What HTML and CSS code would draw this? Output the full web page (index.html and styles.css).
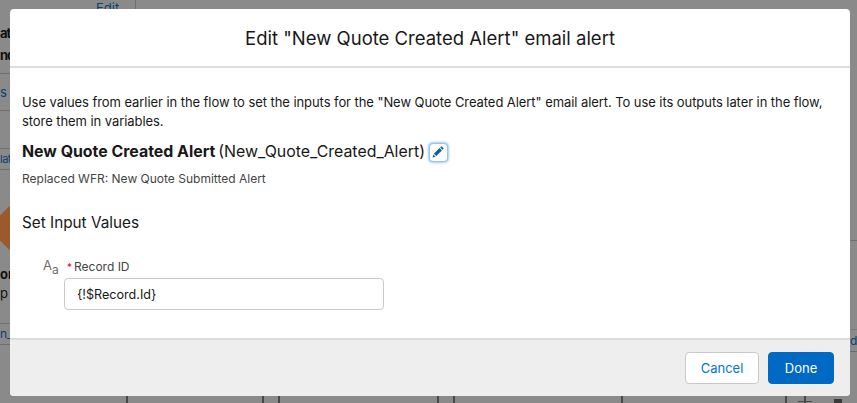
FILE: index.html
```html
<!DOCTYPE html>
<html lang="en">
<head>
	<meta charset="UTF-8">
	<title>Edit email alert</title>
	<link rel="stylesheet" href="styles.css">
</head>
<body>
	<div class="canvas">
		<span class="bg-text bg-edit">Edit</span>
		<span class="bg-text bg-at">at</span>
		<span class="bg-text bg-nd">nd</span>
		<span class="bg-text bg-s">s</span>
		<span class="bg-text bg-lat">lat</span>
		<span class="bg-text bg-or">or</span>
		<span class="bg-text bg-p">p</span>
		<span class="bg-text bg-n">n_</span>
		<span class="bg-text bg-rd">d</span>
		<div class="bg-line bg-h1"></div>
		<div class="bg-line bg-h2"></div>
		<div class="bg-line bg-h3"></div>
		<div class="bg-line bg-h4"></div>
		<div class="bg-line bg-h5"></div>
		<div class="bg-line bg-h6"></div>
		<div class="bg-line bg-r1"></div>
		<div class="bg-line bg-r2"></div>
		<div class="bg-line bg-r3"></div>
		<div class="bg-line bg-top"></div>
		<div class="bg-line bg-v bg-v1"></div>
		<div class="bg-line bg-v bg-v2"></div>
		<div class="bg-line bg-v bg-v3"></div>
		<div class="bg-line bg-v bg-v4"></div>
		<div class="bg-line bg-v bg-v5"></div>
		<div class="bg-line bg-v bg-v6"></div>
		<div class="bg-line bg-v bg-v7"></div>
		<div class="bg-line bg-v bg-v8"></div>
		<div class="bg-line bg-plus"></div>
		<div class="bg-trash"></div>
		<div class="bg-diamond"></div>
	</div>

	<div class="modal">
		<header class="modal-header">
			<h1>Edit "New Quote Created Alert" email alert</h1>
		</header>
		<div class="modal-body">
			<p class="intro">Use values from earlier in the flow to set the inputs for the "New Quote Created Alert" email alert. To use its outputs later in the flow, store them in variables.</p>
			<div class="action-title">
				<span class="action-name"><b>New Quote Created Alert</b> (New_Quote_Created_Alert)</span>
				<button class="edit-button" type="button" aria-label="Edit">
					<svg viewBox="0 0 12 12" width="12" height="12"><path d="M0.6 11.4 L1.3 8.4 L3.6 10.7 Z M1.9 7.7 L7.5 2.1 L9.9 4.5 L4.3 10.1 Z M8.2 1.4 L9 0.6 Q9.5 0.2 10 0.6 L11.4 2 Q11.8 2.5 11.4 3 L10.6 3.8 Z" fill="#0f5ba8"/></svg>
				</button>
			</div>
			<p class="description">Replaced WFR: New Quote Submitted Alert</p>
			<h2>Set Input Values</h2>
			<div class="field">
				<span class="type-icon">A<sub>a</sub></span>
				<div class="field-main">
					<label class="field-label" for="recordId"><span class="required">*</span>Record ID</label>
					<input class="field-input" id="recordId" type="text" value="{!$Record.Id}">
				</div>
			</div>
		</div>
		<footer class="modal-footer">
			<button class="btn btn-neutral" type="button">Cancel</button>
			<button class="btn btn-brand" type="button">Done</button>
		</footer>
	</div>
</body>
</html>
```

FILE: styles.css
```css
* {
	box-sizing: border-box;
}

body {
	margin: 0;
	width: 857px;
	height: 403px;
	overflow: hidden;
	position: relative;
	background-color: #8a8a8a;
	font-family: 'Inter', 'Liberation Sans', sans-serif;
	color: #181818;
}

/* page behind the backdrop */
.canvas {
	position: absolute;
	inset: 0;
}

.bg-text {
	position: absolute;
	font-size: 13px;
	line-height: 16px;
	color: #111;
}

.bg-edit { left: 96px; top: 0; color: #0c3e6e; }
.bg-at { left: 0; top: 25px; font-weight: 700; letter-spacing: -1px; }
.bg-nd { left: 0; top: 47px; font-weight: 700; letter-spacing: -1px; }
.bg-s { left: 0; top: 84px; color: #0c3e6e; }
.bg-lat { left: 0; top: 151px; color: #0c3e6e; font-size: 11px; letter-spacing: -0.5px; }
.bg-or { left: 0; top: 266px; font-weight: 700; }
.bg-p { left: 0; top: 285px; }
.bg-n { left: 0; top: 326px; color: #0c3e6e; font-size: 12px; }
.bg-rd { left: 850px; top: 333px; color: #0c3e6e; font-size: 12px; }

.bg-line {
	position: absolute;
	background-color: #6e6e6e;
}

.bg-h1 { left: 0; top: 73px; width: 10px; height: 1px; }
.bg-h2 { left: 0; top: 110px; width: 10px; height: 1px; }
.bg-h3 { left: 0; top: 148px; width: 10px; height: 1px; }
.bg-h4 { left: 0; top: 169px; width: 10px; height: 1px; }
.bg-h5 { left: 0; top: 323px; width: 10px; height: 1px; }
.bg-h6 { left: 0; top: 344px; width: 10px; height: 1px; }
.bg-r1 { left: 850px; top: 240px; width: 7px; height: 1px; }
.bg-r2 { left: 850px; top: 329px; width: 7px; height: 1px; background-color: #7a7a7a; }
.bg-r3 { left: 850px; top: 351px; width: 7px; height: 1px; }
.bg-top { left: 135px; top: 0; width: 1px; height: 9px; }

.bg-v {
	top: 396px;
	width: 2px;
	height: 7px;
	background-color: #484848;
}

.bg-v1 { left: 126px; }
.bg-v2 { left: 262px; }
.bg-v3 { left: 278px; }
.bg-v4 { left: 437px; }
.bg-v5 { left: 453px; }
.bg-v6 { left: 621px; }
.bg-v7 { left: 785px; }
.bg-v8 { left: 804px; }

.bg-plus {
	left: 798px;
	top: 401px;
	width: 14px;
	height: 1px;
	background-color: #484848;
}

.bg-trash {
	position: absolute;
	left: 834px;
	top: 399px;
	width: 8px;
	height: 4px;
	background-color: #3a3a3a;
}

.bg-diamond {
	position: absolute;
	left: 0;
	top: 198px;
	width: 60px;
	height: 60px;
	transform: rotate(45deg);
	background-color: #9a5a2c;
}

.modal {
	position: absolute;
	left: 10px;
	top: 9px;
	width: 840px;
	height: 387px;
	display: flex;
	flex-direction: column;
	background-color: #fff;
	border-radius: 4px;
	overflow: hidden;
}

.modal-header {
	height: 59px;
	padding-top: 1px;
	display: flex;
	align-items: center;
	justify-content: center;
	border-bottom: 2px solid #dcdcdc;
}

h1 {
	margin: 0;
	font-size: 18.5px;
	font-weight: 400;
	line-height: 24px;
}

.modal-body {
	flex: 1;
	padding: 25px 12px 0;
}

.intro {
	margin: 0;
	font-size: 13px;
	line-height: 19px;
	letter-spacing: -0.07px;
	color: #181818;
}

.action-title {
	margin-top: 11px;
	display: flex;
	align-items: center;
	gap: 4px;
}

.action-name {
	font-size: 15.9px;
	line-height: 20px;
}

.action-name b {
	margin-right: -1.5px;
}

.edit-button {
	width: 19px;
	height: 19px;
	padding: 0;
	display: flex;
	align-items: center;
	justify-content: center;
	background-color: #fff;
	border: 1px solid #9cc3ea;
	border-radius: 4px;
	box-shadow: 0 0 3px #3f94e0;
}

.description {
	margin: 9px 0 0;
	font-size: 12px;
	line-height: 16px;
	color: #444;
}

h2 {
	margin: 26px 0 0;
	font-size: 15.3px;
	font-weight: 400;
	line-height: 20px;
}

.field {
	margin-top: 26px;
	display: flex;
	padding-left: 21px;
}

.type-icon {
	width: 21px;
	margin-top: -2px;
	font-size: 13px;
	line-height: 16px;
	color: #706e6b;
}

.type-icon sub {
	font-size: 12px;
	line-height: 0;
}

.field-label {
	display: block;
	font-size: 12px;
	line-height: 16px;
	color: #444;
}

.required {
	color: #ea001e;
	font-size: 10px;
	margin: 0 2px 0 3px;
}

.field-input {
	display: block;
	margin-top: 3px;
	width: 320px;
	height: 32px;
	padding: 0 12px;
	border: 1px solid #c9c9c9;
	border-radius: 4px;
	font: inherit;
	font-size: 12.6px;
	color: #181818;
}

.modal-footer {
	height: 58px;
	display: flex;
	align-items: center;
	justify-content: flex-end;
	gap: 9px;
	padding: 0 16px 0 0;
	background-color: #eee;
	border-top: 2px solid #dcdcdc;
}

.btn {
	height: 32px;
	border-radius: 4px;
	font-family: inherit;
	font-size: 13px;
	font-weight: 400;
}

.btn-neutral {
	width: 74px;
	background-color: #fff;
	border: 1px solid #c9c9c9;
	color: #0176d3;
}

.btn-brand {
	width: 66px;
	background-color: #0069c4;
	border: 1px solid #0069c4;
	color: #fff;
}
```
